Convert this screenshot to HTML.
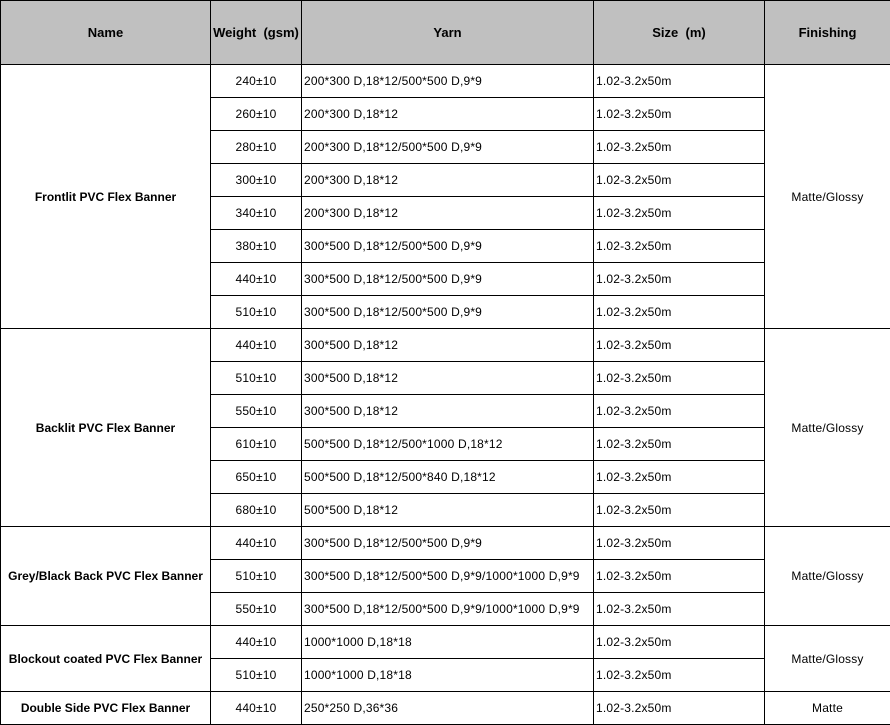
<!DOCTYPE html>
<html><head><style>
body{margin:0;background:#fff;width:890px;height:724px;overflow:hidden}
table{border-collapse:collapse;table-layout:fixed;width:890px;font-family:"Liberation Sans",Arial,sans-serif;font-size:12px;color:#000}
td,th{border:1px solid #000;padding:0;height:32px;white-space:nowrap;overflow:hidden}
th{background:#c0c0c0;height:63px;font-size:13px;font-weight:bold;text-align:center}
td.c{text-align:center;letter-spacing:0.18px}
td.l{padding-left:2px;letter-spacing:0.18px}
td.n{font-weight:bold;text-align:center}
</style></head><body>
<table>
<colgroup><col style="width:210px"><col style="width:91px"><col style="width:292px"><col style="width:171px"><col style="width:126px"></colgroup>
<tr><th>Name</th><th>Weight&nbsp; (gsm)</th><th>Yarn</th><th>Size&nbsp; (m)</th><th>Finishing</th></tr>
<tr><td class="n" rowspan="8">Frontlit PVC Flex Banner</td><td class="c">240±10</td><td class="l">200*300 D,18*12/500*500 D,9*9</td><td class="l">1.02-3.2x50m</td><td class="c" rowspan="8">Matte/Glossy</td></tr>
<tr><td class="c">260±10</td><td class="l">200*300 D,18*12</td><td class="l">1.02-3.2x50m</td></tr>
<tr><td class="c">280±10</td><td class="l">200*300 D,18*12/500*500 D,9*9</td><td class="l">1.02-3.2x50m</td></tr>
<tr><td class="c">300±10</td><td class="l">200*300 D,18*12</td><td class="l">1.02-3.2x50m</td></tr>
<tr><td class="c">340±10</td><td class="l">200*300 D,18*12</td><td class="l">1.02-3.2x50m</td></tr>
<tr><td class="c">380±10</td><td class="l">300*500 D,18*12/500*500 D,9*9</td><td class="l">1.02-3.2x50m</td></tr>
<tr><td class="c">440±10</td><td class="l">300*500 D,18*12/500*500 D,9*9</td><td class="l">1.02-3.2x50m</td></tr>
<tr><td class="c">510±10</td><td class="l">300*500 D,18*12/500*500 D,9*9</td><td class="l">1.02-3.2x50m</td></tr>
<tr><td class="n" rowspan="6">Backlit PVC Flex Banner</td><td class="c">440±10</td><td class="l">300*500 D,18*12</td><td class="l">1.02-3.2x50m</td><td class="c" rowspan="6">Matte/Glossy</td></tr>
<tr><td class="c">510±10</td><td class="l">300*500 D,18*12</td><td class="l">1.02-3.2x50m</td></tr>
<tr><td class="c">550±10</td><td class="l">300*500 D,18*12</td><td class="l">1.02-3.2x50m</td></tr>
<tr><td class="c">610±10</td><td class="l">500*500 D,18*12/500*1000 D,18*12</td><td class="l">1.02-3.2x50m</td></tr>
<tr><td class="c">650±10</td><td class="l">500*500 D,18*12/500*840 D,18*12</td><td class="l">1.02-3.2x50m</td></tr>
<tr><td class="c">680±10</td><td class="l">500*500 D,18*12</td><td class="l">1.02-3.2x50m</td></tr>
<tr><td class="n" rowspan="3">Grey/Black Back PVC Flex Banner</td><td class="c">440±10</td><td class="l">300*500 D,18*12/500*500 D,9*9</td><td class="l">1.02-3.2x50m</td><td class="c" rowspan="3">Matte/Glossy</td></tr>
<tr><td class="c">510±10</td><td class="l">300*500 D,18*12/500*500 D,9*9/1000*1000 D,9*9</td><td class="l">1.02-3.2x50m</td></tr>
<tr><td class="c">550±10</td><td class="l">300*500 D,18*12/500*500 D,9*9/1000*1000 D,9*9</td><td class="l">1.02-3.2x50m</td></tr>
<tr><td class="n" rowspan="2">Blockout coated PVC Flex Banner</td><td class="c">440±10</td><td class="l">1000*1000 D,18*18</td><td class="l">1.02-3.2x50m</td><td class="c" rowspan="2">Matte/Glossy</td></tr>
<tr><td class="c">510±10</td><td class="l">1000*1000 D,18*18</td><td class="l">1.02-3.2x50m</td></tr>
<tr><td class="n">Double Side PVC Flex Banner</td><td class="c">440±10</td><td class="l">250*250 D,36*36</td><td class="l">1.02-3.2x50m</td><td class="c">Matte</td></tr>
</table>
</body></html>
